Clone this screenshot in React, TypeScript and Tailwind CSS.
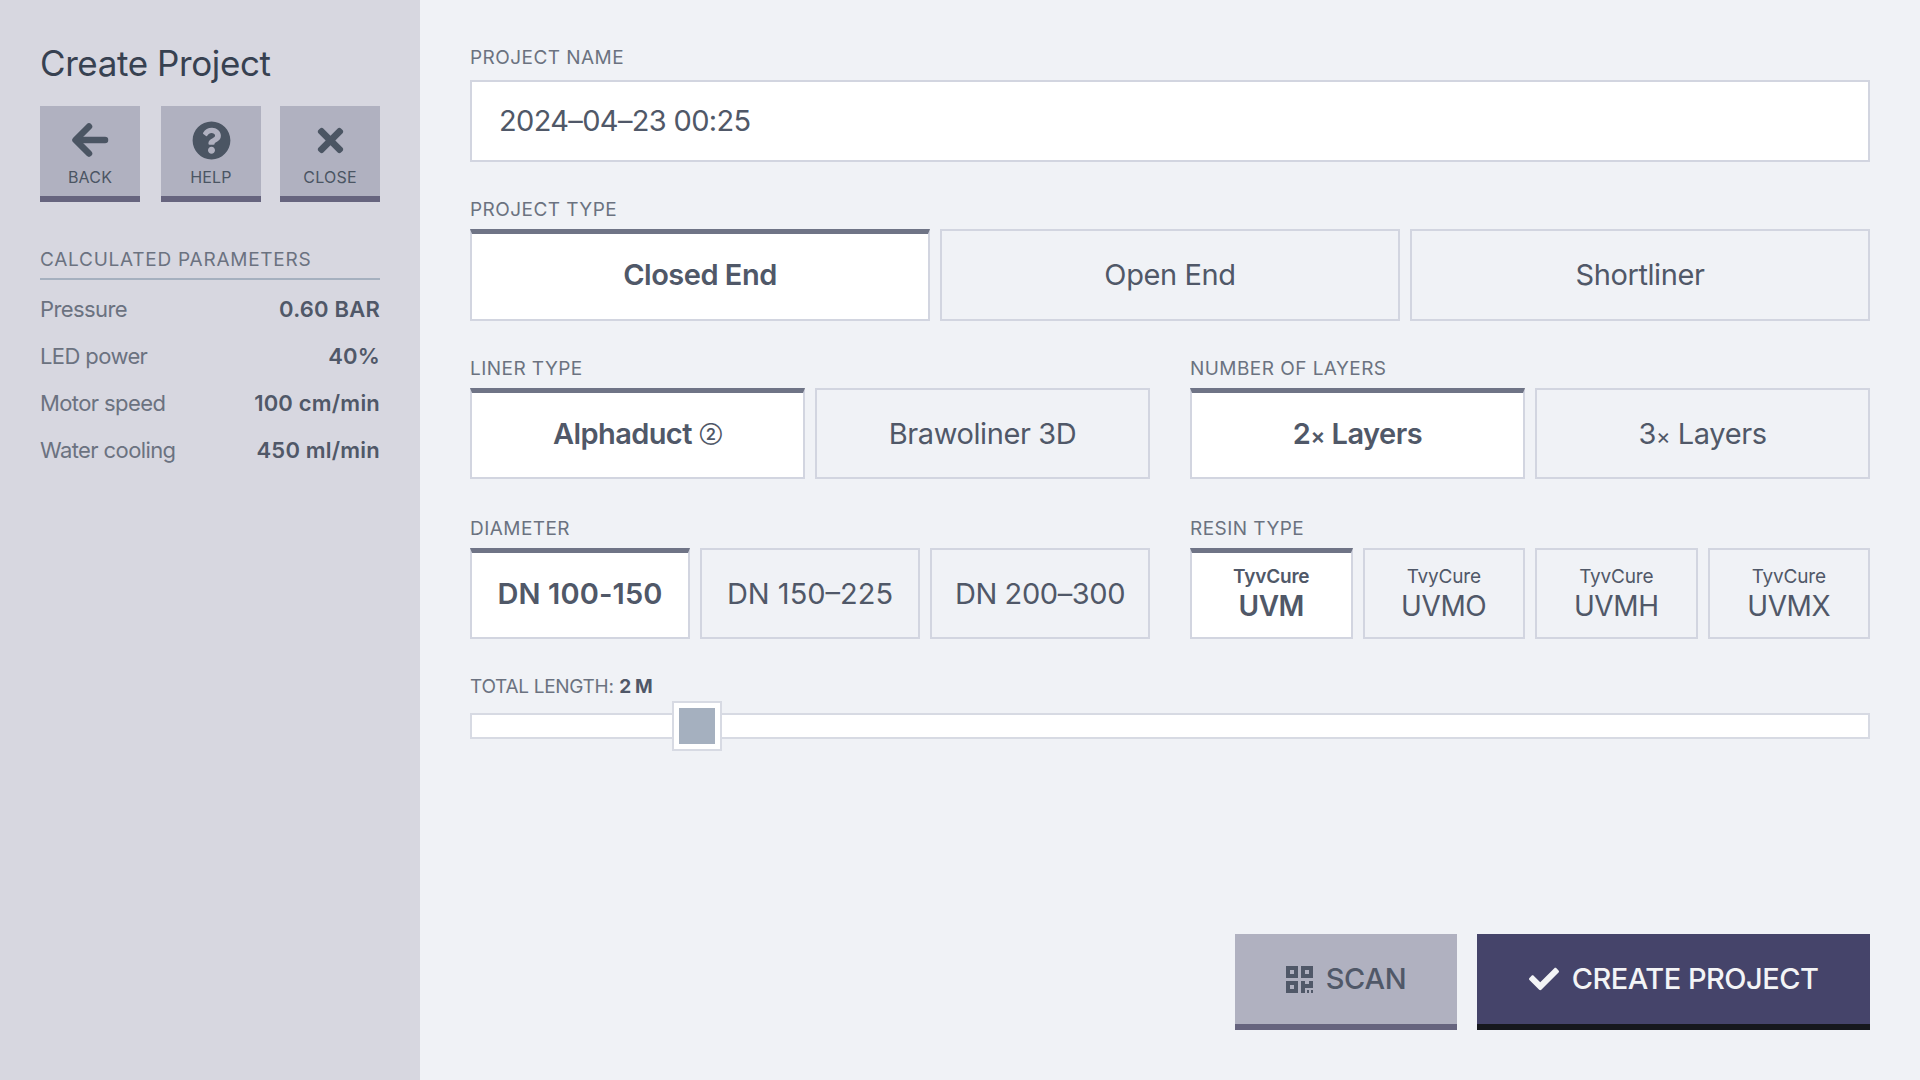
import React from 'react';
import { FaQuestionCircle, FaTimes, FaCheck } from 'react-icons/fa';

const Label = ({ children }: { children: React.ReactNode }) => (
  <div className="h-[25px] text-[19px] leading-[25px] text-[#6b7280] tracking-[0.45px]">{children}</div>
);

function Choice({ active, children }: { active?: boolean; children: React.ReactNode }) {
  return (
    <div
      className={
        active
          ? 'flex-1 min-w-0 flex flex-col items-center justify-center bg-white border-2 border-[#d2d5e0] border-t-[5px] border-t-[#6f7486] pb-[3px] font-semibold text-[#505868] text-[29px] tracking-[-0.5px]'
          : 'flex-1 min-w-0 flex flex-col items-center justify-center border-2 border-[#d2d5e0] text-[#505868] text-[29px] tracking-[-0.4px]'
      }
    >
      {children}
    </div>
  );
}

function ToolButton({ icon, label, className = '' }: { icon: React.ReactNode; label: string; className?: string }) {
  return (
    <div className={'w-[100px] h-[96px] bg-[#b0b1c0] border-b-[6px] border-[#66647e] flex flex-col items-center pt-[14px] text-[#4b5563] ' + className}>
      <div className="h-[40px] flex items-center justify-center">{icon}</div>
      <div className="mt-[7px] text-[16px] leading-[20px] tracking-[0.2px]">{label}</div>
    </div>
  );
}

function BackIcon() {
  return (
    <svg width="38" height="36" viewBox="0 0 38 36" fill="none" stroke="currentColor" strokeWidth="6.5" strokeLinecap="round" strokeLinejoin="round">
      <path d="M34 18H6" />
      <path d="M18 4.5L4.5 18L18 31.5" />
    </svg>
  );
}

// four blocks of a qr code, the last one broken up at the corner
function QrIcon() {
  return (
    <svg width="27" height="27" viewBox="0 0 27 27" fill="currentColor" fillRule="evenodd">
      <path d="M0 0h12v12H0zM4 4v4h4V4z" />
      <path d="M15 0h12v12H15zM19 4v4h4V4z" />
      <path d="M0 15h12v12H0zM4 19v4h4v-4z" />
      <path d="M15 15h4v3h4v-3h4v7h-8v5h-4z" />
      <path d="M21 24h2v3h-2zM25 24h2v3h-2z" />
    </svg>
  );
}

const params = [
  ['Pressure', '0.60 BAR'],
  ['LED power', '40%'],
  ['Motor speed', '100 cm/min'],
  ['Water cooling', '450 ml/min'],
];

function Resin({ name, prefix = 'TyvCure', active }: { name: string; prefix?: string; active?: boolean }) {
  return (
    <Choice active={active}>
      <div className="text-[19px] leading-[24px] tracking-[-0.2px]">{prefix}</div>
      <div className="text-[28px] leading-[34px]">{name}</div>
    </Choice>
  );
}

export default function App() {
  return (
    <div className="w-[1920px] h-[1080px] flex bg-[#f0f2f6] overflow-hidden font-['Inter',sans-serif]">
      <aside className="w-[420px] shrink-0 bg-[#d7d7e0] px-[40px] pt-[40px]">
        <h1 className="text-[35px] leading-[46px] text-[#374151] tracking-[-0.4px]">Create Project</h1>
        <div className="mt-[20px] flex">
          <ToolButton icon={<BackIcon />} label="BACK" />
          <ToolButton icon={<FaQuestionCircle size={39} />} label="HELP" className="ml-[21px]" />
          <ToolButton icon={<FaTimes size={37} />} label="CLOSE" className="ml-[19px]" />
        </div>
        <div className="mt-[46px] pb-[6px] border-b-2 border-[#a5b0bf] text-[19px] leading-[24px] text-[#6b7280] tracking-[0.75px]">
          CALCULATED PARAMETERS
        </div>
        <div className="mt-[6px]">
          {params.map(([k, v]) => (
            <div key={k} className="h-[47px] flex items-center justify-between text-[22px] text-[#505868]">
              <span className="text-[#6b7280] tracking-[-0.6px]">{k}</span>
              <span className="font-semibold tracking-[0.2px]">{v}</span>
            </div>
          ))}
        </div>
      </aside>

      <main className="flex-1 flex flex-col px-[50px] pt-[45px] pb-[50px]">
        <Label>PROJECT NAME</Label>
        <div className="mt-[10px] h-[82px] bg-white border-2 border-[#d2d5e0] flex items-center pl-[27px] text-[29px] tracking-[-0.65px] text-[#505868]">
          2024–04–23 00:25
        </div>

        <div className="mt-[35px]">
          <Label>PROJECT TYPE</Label>
        </div>
        <div className="mt-[7px] h-[92px] flex gap-[10px]">
          <Choice active>Closed End</Choice>
          <Choice>Open End</Choice>
          <Choice>Shortliner</Choice>
        </div>

        <div className="mt-[35px] grid grid-cols-2 gap-x-[40px] gap-y-[37px]">
          <div>
            <Label>LINER TYPE</Label>
            <div className="mt-[7px] h-[91px] flex gap-[10px]">
              <Choice active>
                <span className="flex items-center gap-[8px] tracking-[-0.6px]">
                  Alphaduct
                  <span className="font-semibold text-[16px] tracking-normal">②</span>
                </span>
              </Choice>
              <Choice>Brawoliner 3D</Choice>
            </div>
          </div>
          <div>
            <Label>NUMBER OF LAYERS</Label>
            <div className="mt-[7px] h-[91px] flex gap-[10px]">
              <Choice active>
                <span>2<span className="text-[22px]">×</span> Layers</span>
              </Choice>
              <Choice>
                <span>3<span className="text-[22px]">×</span> Layers</span>
              </Choice>
            </div>
          </div>
          <div>
            <Label>DIAMETER</Label>
            <div className="mt-[7px] h-[91px] flex gap-[10px]">
              <Choice active><span className="tracking-[0.1px]">DN 100-150</span></Choice>
              <Choice><span className="tracking-[0px]">DN 150–225</span></Choice>
              <Choice><span className="tracking-[-0.4px]">DN 200–300</span></Choice>
            </div>
          </div>
          <div>
            <Label>RESIN TYPE</Label>
            <div className="mt-[7px] h-[91px] flex gap-[10px]">
              <Resin name="UVM" active />
              <Resin name="UVMO" prefix="TvyCure" />
              <Resin name="UVMH" />
              <Resin name="UVMX" />
            </div>
          </div>
        </div>

        <div className="mt-[35px]">
          <Label>
            <span className="tracking-[-0.3px]">TOTAL LENGTH:</span>{' '}
            <span className="font-bold text-[#505868] tracking-[-0.4px]">2 M</span>
          </Label>
        </div>
        <div className="relative mt-[14px] h-[26px] bg-white border-2 border-[#d7dae3]">
          <div className="absolute left-[200px] top-[-14px] w-[50px] h-[50px] bg-white border-2 border-[#d7dae3] flex items-center justify-center">
            <div className="w-[36px] h-[36px] bg-[#a5b0bf]" />
          </div>
        </div>

        <div className="mt-auto flex justify-end gap-[20px]">
          <div className="w-[222px] h-[96px] bg-[#b0b1c0] border-b-[6px] border-[#66647e] flex items-center justify-center gap-[13px] text-[29px] tracking-[-0.3px] font-medium text-[#505868]">
            <QrIcon />
            SCAN
          </div>
          <div className="w-[393px] h-[96px] bg-[#45446a] border-b-[6px] border-[#16181d] flex items-center justify-center gap-[13px] text-[29px] tracking-[-0.5px] font-medium text-[#f3f4f6]">
            <FaCheck size={30} />
            CREATE PROJECT
          </div>
        </div>
      </main>
    </div>
  );
}
